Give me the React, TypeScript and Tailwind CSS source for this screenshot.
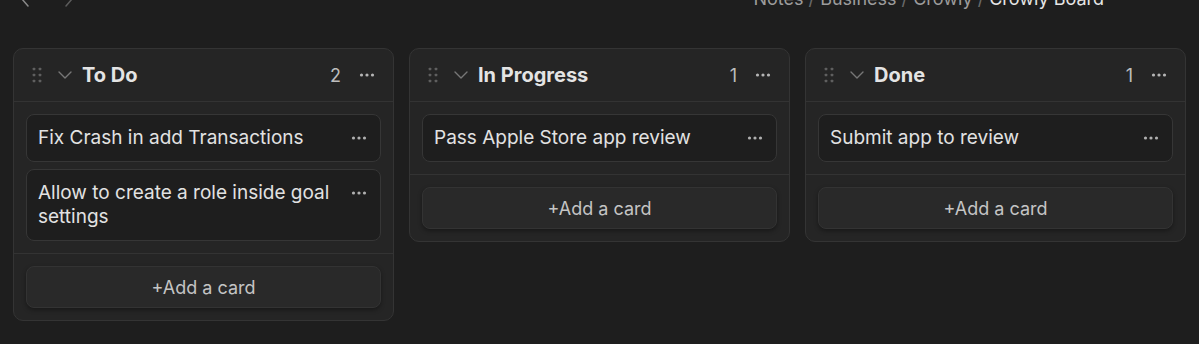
import React from "react";

type Column = {
  title: string;
  cards: string[];
};

const columns: Column[] = [
  {
    title: "To Do",
    cards: [
      "Fix Crash in add Transactions",
      "Allow to create a role inside goal settings",
    ],
  },
  { title: "In Progress", cards: ["Pass Apple Store app review"] },
  { title: "Done", cards: ["Submit app to review"] },
];

function Dots({ className = "" }: { className?: string }) {
  return (
    <svg width="16" height="6" viewBox="0 0 16 6" className={className}>
      <circle cx="2.5" cy="3" r="1.6" fill="currentColor" />
      <circle cx="8" cy="3" r="1.6" fill="currentColor" />
      <circle cx="13.5" cy="3" r="1.6" fill="currentColor" />
    </svg>
  );
}

function Handle() {
  return (
    <svg width="10" height="16" viewBox="0 0 10 16" className="text-[#5f5f5f]">
      {[2, 8, 14].map((y) =>
        [2, 8].map((x) => (
          <rect key={`${x}-${y}`} x={x - 1.3} y={y - 1.3} width="2.6" height="2.6" rx="0.6" fill="currentColor" />
        ))
      )}
    </svg>
  );
}

function Chevron() {
  return (
    <svg width="14" height="8" viewBox="0 0 14 8" className="text-[#777]">
      <path d="M1 1l6 6 6-6" fill="none" stroke="currentColor" strokeWidth="1.4" strokeLinecap="round" strokeLinejoin="round" />
    </svg>
  );
}

function BoardColumn({ column }: { column: Column }) {
  return (
    <div className="w-[381px] shrink-0 rounded-[10px] border border-[#343434] bg-[#252525]">
      {/* header */}
      <div className="flex h-[53px] items-center border-b border-[#333] pl-[18px] pr-[18px]">
        <Handle />
        <span className="ml-[16px]">
          <Chevron />
        </span>
        <h2 className="ml-[10px] text-[20px] font-bold text-[#e4e4e4]">{column.title}</h2>
        <span className="ml-auto text-[18px] text-[#bdbdbd]">{column.cards.length}</span>
        <Dots className="ml-[18px] text-[#b5b5b5]" />
      </div>

      {/* cards */}
      <div className="flex flex-col gap-[7px] p-[12px]">
        {column.cards.map((c) => (
          <div
            key={c}
            className="flex items-start justify-between gap-3 rounded-[8px] border border-[#363636] bg-[#1e1e1e] py-[11px] pl-[11px] pr-[12px]"
          >
            <p className="text-[19px] leading-[24px] text-[#e2e2e2]">{c}</p>
            <span className="flex h-[24px] shrink-0 items-center pr-[1px]">
              <Dots className="text-[#b0b0b0]" />
            </span>
          </div>
        ))}
      </div>

      {/* add */}
      <div className="border-t border-[#333] p-[12px]">
        <button className="flex h-[42px] w-full items-center justify-center rounded-[8px] border border-[#333] bg-[#292929] text-[18px] text-[#c4c4c4] shadow-[0_2px_4px_rgba(0,0,0,0.35)]">
          +Add a card
        </button>
      </div>
    </div>
  );
}

export default function App() {
  return (
    <div className="min-h-[344px] w-full overflow-hidden bg-[#1e1e1e] font-['Inter',sans-serif]">
      {/* top bar */}
      <div className="-mt-[13px] flex h-[24px] items-center pl-[20px] pr-[95px]">
        <svg width="10" height="16" viewBox="0 0 10 16" className="text-[#8a8a8a]">
          <path d="M8 1L2 8l6 7" fill="none" stroke="currentColor" strokeWidth="1.5" strokeLinecap="round" />
        </svg>
        <svg width="10" height="16" viewBox="0 0 10 16" className="ml-[34px] text-[#5c5c5c]">
          <path d="M2 1l6 7-6 7" fill="none" stroke="currentColor" strokeWidth="1.5" strokeLinecap="round" />
        </svg>
        <div className="ml-auto text-[18px] leading-[24px] text-[#9c9c9c]">
          Notes <span className="text-[#6a6a6a]">/</span> Business{" "}
          <span className="text-[#6a6a6a]">/</span> Crowly{" "}
          <span className="text-[#6a6a6a]">/</span>{" "}
          <span className="text-[#e6e6e6]">Crowly Board</span>
        </div>
      </div>

      {/* board */}
      <div className="mt-[37px] flex items-start gap-[15px] pl-[13px]">
        {columns.map((c) => (
          <BoardColumn key={c.title} column={c} />
        ))}
      </div>
    </div>
  );
}
